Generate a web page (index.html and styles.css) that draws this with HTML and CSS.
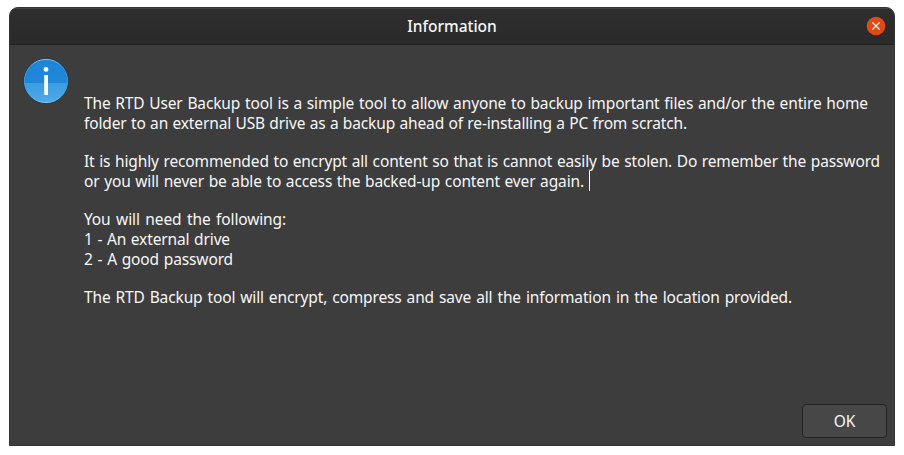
FILE: index.html
```html
<!DOCTYPE html>
<html lang="en">
<head>
<meta charset="utf-8">
<title>Information</title>
<link rel="stylesheet" href="styles.css">
</head>
<body>
<main class="window">
  <header class="titlebar">
    <h1 class="title">Information</h1>
    <button class="close" aria-label="Close">
      <svg width="20" height="20" viewBox="0 0 20 20"><circle cx="10" cy="10" r="9.3" fill="#e04a16"/><path d="M6.4 6.4l7.2 7.2M13.6 6.4l-7.2 7.2" stroke="#fff" stroke-width="1.3" fill="none"/></svg>
    </button>
  </header>
  <section class="content">
    <svg class="info" width="48" height="48" viewBox="0 0 48 48">
      <defs>
        <linearGradient id="disc" x1="0" y1="0" x2="0" y2="1"><stop offset="0" stop-color="#1c86d8"/><stop offset=".54" stop-color="#2087da"/><stop offset=".54" stop-color="#3c9cdf"/><stop offset="1" stop-color="#4dabe8"/></linearGradient>
        <linearGradient id="rim" x1="0" y1="0" x2="0" y2="1"><stop offset="0" stop-color="#7fc3f5"/><stop offset=".25" stop-color="#3392dc"/><stop offset=".75" stop-color="#48a5e4"/><stop offset="1" stop-color="#7cc8f5"/></linearGradient>
      </defs>
      <circle cx="24" cy="24" r="22.8" fill="#263b4c"/>
      <circle cx="24" cy="24" r="21.6" fill="url(#disc)" stroke="url(#rim)"/>
      <circle cx="24" cy="12.4" r="2.4" fill="#fff"/>
      <rect x="22.2" y="18" width="3.8" height="20" rx=".6" fill="#fff"/>
    </svg>
    <div class="message">
      <p class="paragraph"><span class="line w784">The RTD User Backup tool is a simple tool to allow anyone to backup important files and/or the entire home</span>
      <span class="line w603">folder to an external USB drive as a backup ahead of re-installing a PC from scratch.</span></p>
      <p class="paragraph"><span class="line w796">It is highly recommended to encrypt all content so that is cannot easily be stolen. Do remember the password</span>
      <span class="row"><span class="line w500">or you will never be able to access the backed-up content ever again.</span><i class="caret"></i></span></p>
      <p class="paragraph"><span class="line w202">You will need the following:</span>
      <span class="line w146">1 - An external drive</span>
      <span class="line w149">2 - A good password</span></p>
      <p class="paragraph"><span class="line w708">The RTD Backup tool will encrypt, compress and save all the information in the location provided.</span></p>
    </div>
  </section>
  <footer class="actions"><button class="ok">OK</button></footer>
</main>
</body>
</html>
```
FILE: styles.css
```css
* { box-sizing: border-box; }
body {
  margin: 0;
  padding: 7px 9px 9px;
  height: 455px;
  background: #fff;
  color: #f7f7f7;
  font: 15.5px/20px "Noto Sans", sans-serif;
}
.window {
  display: flex;
  flex-direction: column;
  height: 439px;
  border: 1px solid #333;
  border-radius: 9px 9px 0 0;
  background: #3d3d3d;
  overflow: hidden;
}
.titlebar {
  display: grid;
  grid-template-columns: 1fr auto 1fr;
  align-items: center;
  height: 37px;
  flex: none;
  background: linear-gradient(#2e2e2e, #2a2a2a);
  border-top: 1px solid #404040;
  border-bottom: 1px solid #232323;
  padding: 0 8px 2px;
}
.title {
  grid-column: 2;
  margin: 0;
  width: 90px;
  font-size: 15.5px;
  font-weight: 500;
  letter-spacing: 0;
  white-space: nowrap;
  text-align: center;
}
.close {
  justify-self: end;
  width: 20px;
  height: 20px;
  padding: 0;
  border: 0;
  background: none;
}
.close svg { display: block; }
.content {
  display: flex;
  flex: 1;
  padding: 12px 0 0 12px;
}
.info { flex: none; }
.message { padding: 36px 0 0 14px; }
.paragraph { margin: 0 0 18px; }
.line {
  display: block;
  height: 20px;
  white-space: nowrap;
  letter-spacing: -0.13px;
  text-align: justify;
  text-align-last: justify;
}
.row { display: flex; }
.caret {
  width: 1px;
  height: 20px;
  margin-left: 5px;
  background: #fff;
}
.w784 { width: 784px; }
.w603 { width: 603px; }
.w796 { width: 796px; }
.w500 { width: 500px; }
.w202 { width: 202px; }
.w146 { width: 146px; }
.w149 { width: 149px; }
.w708 { width: 708px; }
.actions {
  display: flex;
  justify-content: flex-end;
  padding: 0 7px 7px;
}
.ok {
  width: 85px;
  height: 34px;
  padding: 0;
  border: 1px solid #232323;
  border-radius: 4px;
  background: #474747;
  color: inherit;
  font: inherit;
}
```
